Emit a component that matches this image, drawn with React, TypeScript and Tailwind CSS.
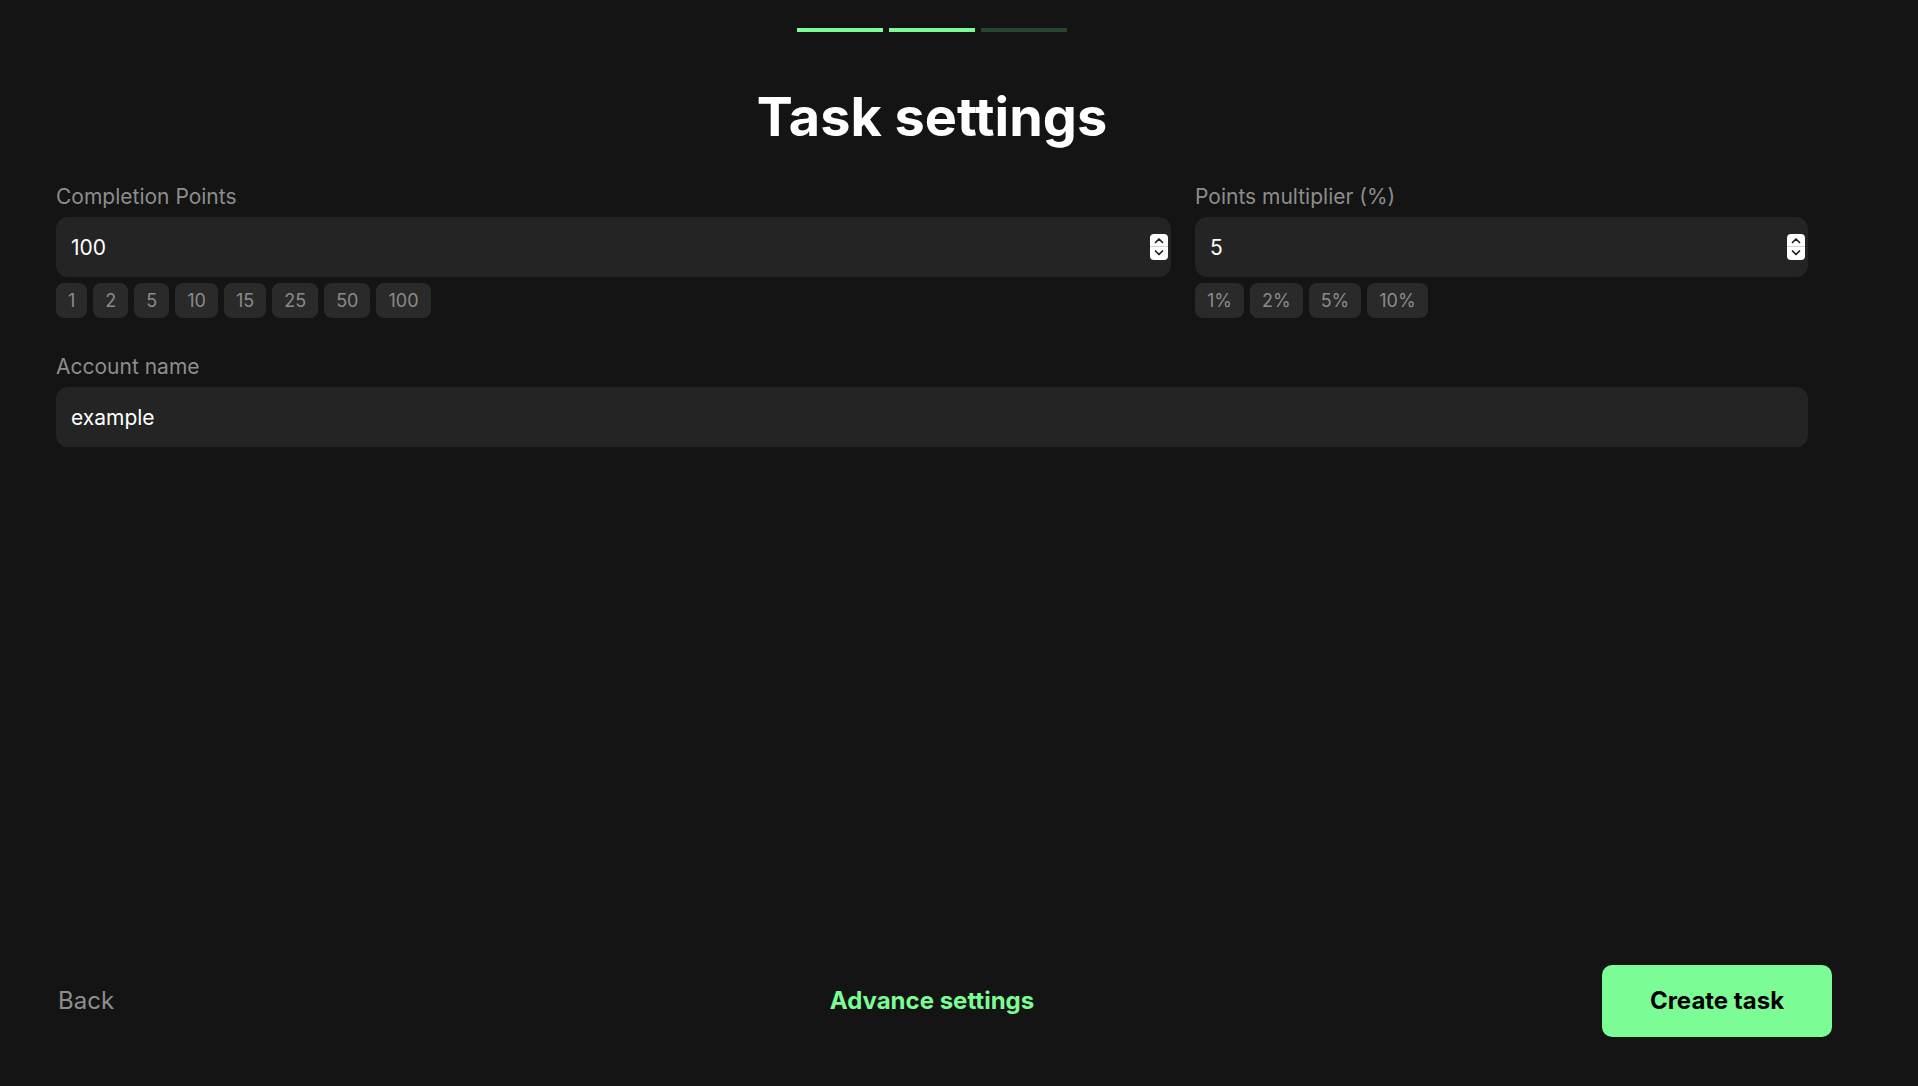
import React from 'react';

const pointOptions = ['1', '2', '5', '10', '15', '25', '50', '100'];
const multiplierOptions = ['1%', '2%', '5%', '10%'];

const Spinner: React.FC = () => (
  <svg
    className="absolute right-[3px] top-1/2 -translate-y-1/2"
    width="18"
    height="26"
    viewBox="0 0 18 26"
  >
    <rect x="0" y="0" width="18" height="26" rx="4" fill="#ffffff" />
    <line x1="0" y1="12.5" x2="18" y2="12.5" stroke="#d4d4d4" strokeWidth="1" />
    <path d="M5.5 8.5 L9 5 L12.5 8.5" fill="none" stroke="#1f1f1f" strokeWidth="1.7" strokeLinecap="round" strokeLinejoin="round" />
    <path d="M5.5 17 L9 20.5 L12.5 17" fill="none" stroke="#1f1f1f" strokeWidth="1.7" strokeLinecap="round" strokeLinejoin="round" />
  </svg>
);

const Chip: React.FC<{ label: string }> = ({ label }) => (
  <button className="h-[35px] px-3 rounded-lg bg-[#2a2a2a] text-[18px] leading-none text-[#8a8a8a]">
    {label}
  </button>
);

const Field: React.FC<{
  label: string;
  value: string;
  stepper?: boolean;
  options?: string[];
}> = ({ label, value, stepper, options }) => (
  <div>
    <label className="block text-[21px] leading-7 text-[#8d8d8d]">{label}</label>
    <div className="relative mt-[6px] h-[60px] rounded-xl bg-[#242424]">
      <input
        readOnly
        value={value}
        className="w-full h-full bg-transparent pl-[15px] pr-8 text-[21px] text-white outline-none"
      />
      {stepper && <Spinner />}
    </div>
    {options && (
      <div className="mt-[6px] flex gap-[6px]">
        {options.map((o) => (
          <Chip key={o} label={o} />
        ))}
      </div>
    )}
  </div>
);

const App: React.FC = () => {
  return (
    <div className="flex h-screen w-full bg-[#141414] font-['Inter',sans-serif]">
      <main className="flex flex-col h-full w-[1864px] shrink-0">
        <div className="flex justify-center gap-[6px] pt-7">
          <div className="w-[86px] h-1 bg-[#7bfc95]" />
          <div className="w-[86px] h-1 bg-[#7bfc95]" />
          <div className="w-[86px] h-1 bg-[#284530]" />
        </div>

        <h1 className="mt-[58px] text-center text-[54px] leading-[54px] font-bold text-white">
          Task settings
        </h1>

        <div className="mt-[39px] px-14">
          <div className="grid grid-cols-[1fr_613px] gap-x-6">
            <Field label="Completion Points" value="100" stepper options={pointOptions} />
            <Field label="Points multiplier (%)" value="5" stepper options={multiplierOptions} />
          </div>
          <div className="mt-[35px]">
            <Field label="Account name" value="example" />
          </div>
        </div>

        <div className="mt-auto grid grid-cols-3 items-center pb-[49px]">
          <div className="pl-[58px]">
            <button className="text-2xl text-[#8e8e8e]">Back</button>
          </div>
          <div className="flex justify-center">
            <button className="text-2xl font-bold text-[#7bfc95]">Advance settings</button>
          </div>
          <div className="flex justify-end pr-[32px]">
            <button className="h-[72px] w-[230px] rounded-[10px] bg-[#7bfc95] text-2xl font-bold text-black">
              Create task
            </button>
          </div>
        </div>
      </main>
    </div>
  );
};

export default App;
